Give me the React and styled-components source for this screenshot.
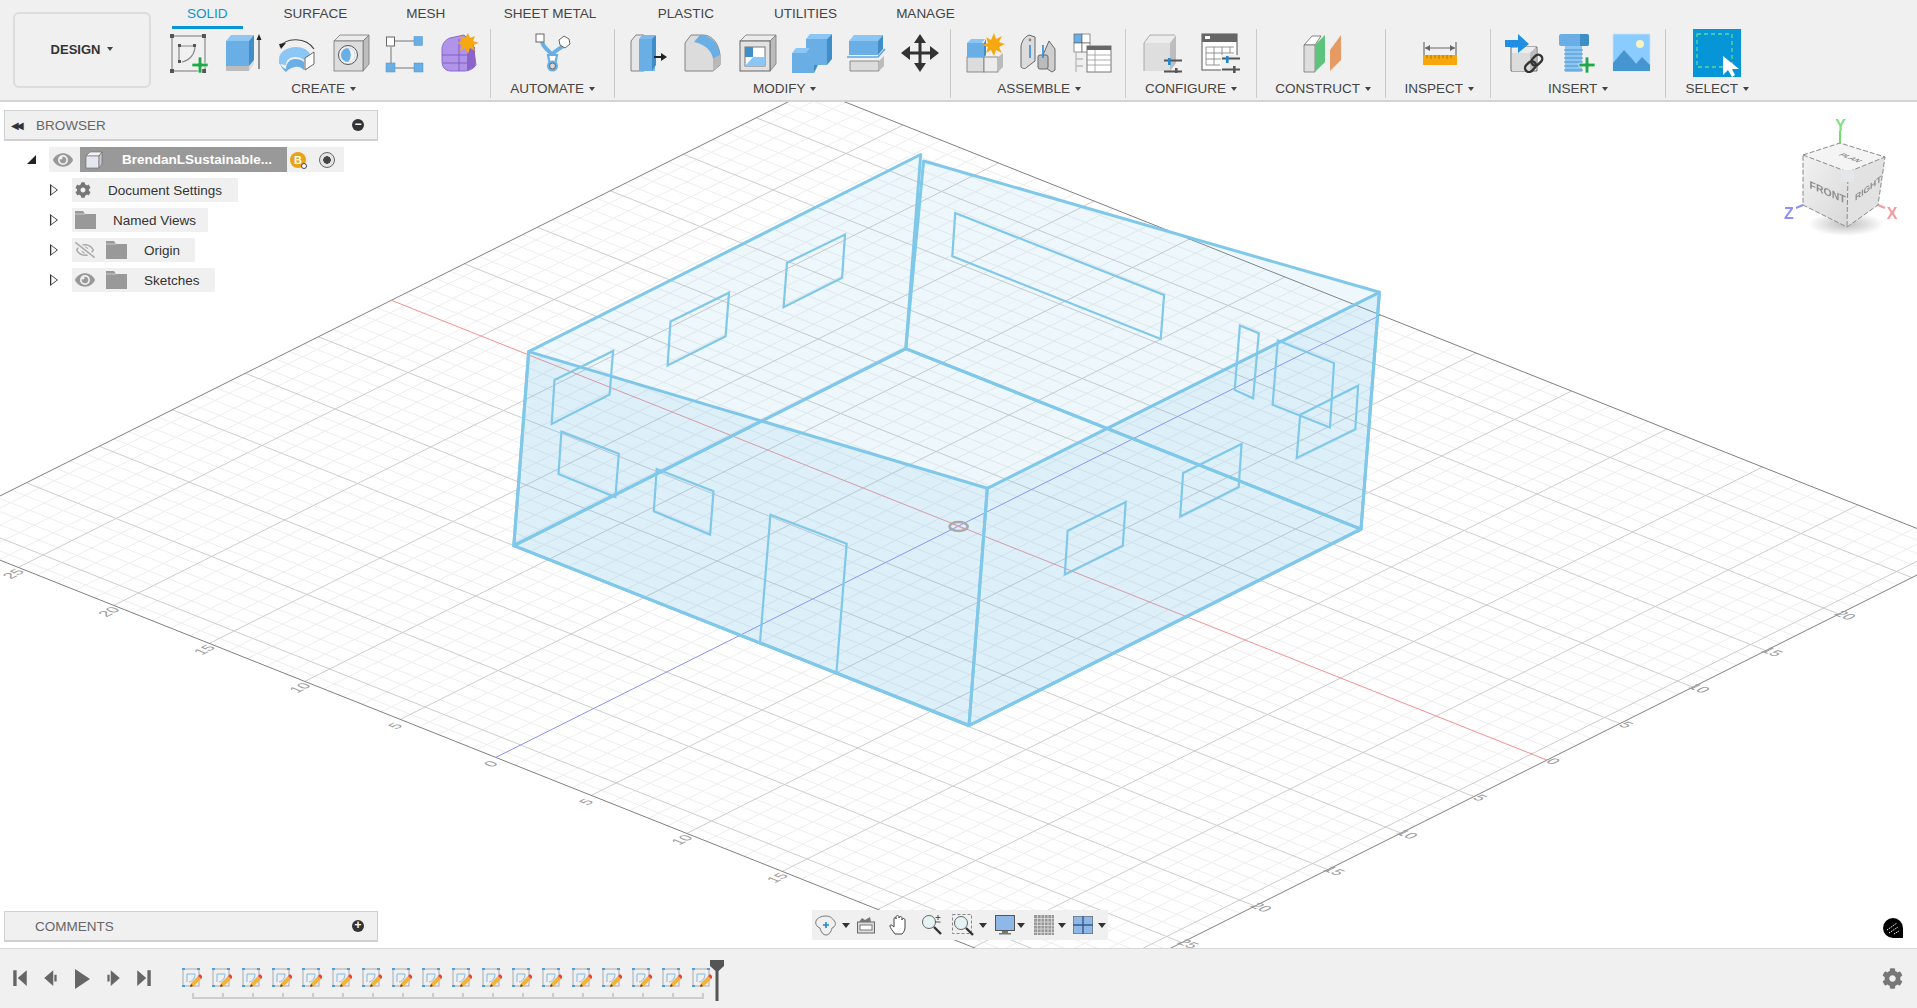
import React from 'react';
import styled, { createGlobalStyle } from 'styled-components';
import { FaCog, FaEye, FaRegEyeSlash } from 'react-icons/fa';

const GlobalStyle = createGlobalStyle`
  html, body {
    margin: 0;
    padding: 0;
    height: 100%;
    overflow: hidden;
    background: #fff;
    font-family: "Liberation Sans", Arial, sans-serif;
  }
`;

const BLUE = '#69aee4';
const DARK = '#3f8ec8';
const GREEN = '#21a84a';

/* ---------- toolbar icons ---------- */

const Ico = ({ w = 40, children }) => (
  <svg width={w} height="40" viewBox={`0 0 ${w} 40`}>
    {children}
  </svg>
);

const Plus = ({ x, y, s = 8 }) => (
  <path d={`M${x - 1.8} ${y - s}h3.6v${s - 1.8}h${s - 1.8}v3.6h-${s - 1.8}v${s - 1.8}h-3.6v-${s - 1.8}h-${s - 1.8}v-3.6h${s - 1.8}z`} fill={GREEN} stroke="#fff" strokeWidth=".6" />
);

const SketchIcon = () => (
  <Ico>
    <rect x="3" y="3" width="33" height="35" fill="none" stroke="#777" strokeWidth="1" />
    {[[1, 1], [33, 1], [1, 36], [33, 36]].map(([x, y]) => (
      <rect key={x + '' + y} x={x} y={y} width="4" height="4" fill="#555" />
    ))}
    <path d="M10 13v15M10 13h15M26 13c0 8-5 14-13 16" fill="none" stroke="#888" strokeWidth="1.2" />
    <rect x="9" y="11" width="3" height="3" fill="#555" />
    <rect x="24" y="11" width="3" height="3" fill="#555" />
    <rect x="9" y="27" width="3" height="3" fill="#555" />
    <Plus x={31} y={32} />
  </Ico>
);

const ExtrudeIcon = () => (
  <Ico>
    <path d="M3 33h23v5H3z" fill="#bdbdbd" />
    <path d="M26 38l5-7v-4l-5 6z" fill="#ddd" />
    <path d="M3 8h23v25H3z" fill={BLUE} />
    <path d="M3 8l5-6h23l-5 6z" fill="#8fc6f2" />
    <path d="M26 8l5-6v25l-5 6z" fill={DARK} />
    <path d="M36 36V4" stroke="#333" strokeWidth="1" />
    <path d="M33.5 7L36 1l2.5 6z" fill="#222" />
  </Ico>
);

const RevolveIcon = () => (
  <Ico>
    <path d="M3 14c6-10 26-10 34 2" fill="none" stroke="#444" strokeWidth="1.2" />
    <path d="M2 11l7-1-5 6z" fill="#222" />
    <path d="M2 26c0-7 8-12 17-12 7 0 12 3 14 7l-6 6c-2-2-5-3-9-3-5 0-9 3-9 8l-7-1z" fill="#8cc6f5" />
    <path d="M2 24c0 6 2 10 7 12 0-6 4-10 9-10 4 0 7 1 9 3v8c-3-3-6-4-9-3-5 1-7 3-9 5-4-3-7-8-7-15z" fill={BLUE} />
    <path d="M28 25l9-6v12l-9 6z" fill="#fff" stroke="#666" strokeWidth="1" />
  </Ico>
);

const HoleIcon = () => (
  <Ico>
    <path d="M3 8l6-6h29l-6 6z" fill="#ececec" stroke="#777" strokeWidth=".8" />
    <path d="M32 8l6-6v29l-6 7z" fill="#bdbdbd" stroke="#777" strokeWidth=".8" />
    <rect x="3" y="8" width="29" height="30" fill="#ddd" stroke="#777" strokeWidth=".8" />
    <circle cx="17" cy="22" r="9.5" fill="#eee" stroke="#555" strokeWidth="1" />
    <circle cx="17" cy="22" r="7" fill={BLUE} />
    <path d="M17 15a7 7 0 0 1 0 14 10 10 0 0 0 0-14z" fill="#f2f2f2" />
  </Ico>
);

const PatternIcon = () => (
  <Ico>
    <path d="M10 8h19M6 14v16M10 35h19" stroke="#777" strokeWidth="1" />
    <rect x="1.5" y="4" width="8" height="9" fill="#fff" stroke="#666" />
    <rect x="29" y="3.5" width="8.5" height="9" fill={BLUE} stroke="#4d93c9" strokeWidth=".5" />
    <rect x="1" y="30" width="9" height="9" fill={BLUE} stroke="#4d93c9" strokeWidth=".5" />
    <rect x="29" y="30" width="9" height="9" fill={BLUE} stroke="#4d93c9" strokeWidth=".5" />
  </Ico>
);

const FormIcon = () => (
  <Ico>
    <path d="M3 16c0-5 3-9 8-11l14-3 9 8 3 22c-3 4-7 6-12 6H12C6 38 3 34 3 28z" fill="#b094ea" stroke="#8e68d0" />
    <path d="M3 22h30M20 6v32M4 30h28" stroke="#7f58bf" strokeWidth=".9" fill="none" />
    <path d="M28 14h8v20l-8 4z" fill="#8a63cb" />
    <path d="M29 0l2 5 5-2-2 5 6 2-6 2 2 6-5-3-2 6-3-6-5 3 2-6-5-2 5-2-2-5 5 2z" fill="#f6a811" />
  </Ico>
);

const AutomateIcon = () => (
  <Ico>
    <path d="M9 9c2 7 7 8 10 13 3-5 8-6 12-10" fill="none" stroke={BLUE} strokeWidth="4" />
    <path d="M15 22h9l-2 10h-5z" fill="#fff" stroke={BLUE} strokeWidth="2.2" />
    <rect x="3" y="1" width="8" height="8" fill="#fff" stroke="#666" />
    <path d="M31 3l5 3 1 5-5 4-5-3-1-5z" fill="#fff" stroke="#666" />
    <circle cx="19.5" cy="33" r="5.5" fill={BLUE} />
    <circle cx="19.5" cy="33" r="3" fill="#d8d8d8" stroke="#666" />
  </Ico>
);

const PressPullIcon = () => (
  <Ico>
    <path d="M1 8l5-6h8v36H1z" fill="#e6e6e6" stroke="#777" strokeWidth=".9" />
    <path d="M9 6l3-4h13v36H9z" fill="#7db9ea" />
    <path d="M22 6l4-4v30l-4 6z" fill={DARK} />
    <path d="M9 6h13v32H9z" fill={BLUE} />
    <path d="M24 24h9" stroke="#222" strokeWidth="2" />
    <path d="M31 20l6 4-6 4z" fill="#222" />
  </Ico>
);

const FilletIcon = () => (
  <Ico>
    <path d="M1 38V10l6-8h12c10 0 16 10 17 20v10l-7 6z" fill="#dcdcdc" stroke="#777" strokeWidth=".9" />
    <path d="M16 2c10 0 19 8 20 20l-7 4c-1-8-8-15-19-17z" fill={BLUE} />
    <path d="M29 26l7-4v10l-7 6z" fill="#b9b9b9" />
  </Ico>
);

const ShellIcon = () => (
  <Ico>
    <path d="M2 8l6-6h30l-6 6z" fill="#ececec" stroke="#777" strokeWidth=".8" />
    <path d="M32 8l6-6v29l-6 7z" fill="#bbb" stroke="#777" strokeWidth=".8" />
    <rect x="2" y="8" width="30" height="30" fill="#e2e2e2" stroke="#666" />
    <rect x="7" y="14" width="20" height="19" fill="#fff" stroke="#777" />
    <path d="M7 14h8v10H7z" fill={DARK} />
    <path d="M7 33l8-9h12v9z" fill="#8cc6f5" />
  </Ico>
);

const CombineIcon = () => (
  <Ico>
    <path d="M14 6l4-5h22l-5 5z" fill="#8cc6f5" />
    <path d="M14 6h21v26H14z" fill={BLUE} />
    <path d="M35 6l5-5v25l-5 6z" fill={DARK} />
    <path d="M0 20l4-5h14l-4 5z" fill="#8cc6f5" />
    <path d="M0 20h22v20H0z" fill={BLUE} />
    <path d="M22 32h4l-4 8z" fill={DARK} />
  </Ico>
);

const SplitIcon = () => (
  <Ico>
    <path d="M3 8l5-6h29l-5 6z" fill="#8cc6f5" />
    <path d="M3 8h29v14H3z" fill={BLUE} />
    <path d="M32 8l5-6v14l-5 6z" fill={DARK} />
    <path d="M1 24h31l7-8" fill="none" stroke="#5da8e2" strokeWidth="1.6" />
    <path d="M4 28h29v10H4z" fill="#dcdcdc" stroke="#777" strokeWidth=".8" />
    <path d="M33 28l5-5v10l-5 5z" fill="#bbb" />
  </Ico>
);

const MoveIcon = () => (
  <Ico>
    <path d="M20 1l6 9h-4.500v8.500H30V13l9 7-9 7v-5.500h-8.500V30H26l-6 9-6-9h4.500v-8.500H10V27l-9-7 9-7v5.500h8.500V10H14z" fill="#333" />
  </Ico>
);

const ComponentIcon = () => (
  <Ico>
    <rect x="2" y="24" width="17" height="15" fill="#dcdcdc" stroke="#777" strokeWidth=".8" />
    <rect x="19" y="24" width="14" height="15" fill="#ececec" stroke="#777" strokeWidth=".8" />
    <path d="M33 24l5-4v14l-5 5z" fill="#bbb" />
    <path d="M2 10l4-4h14l-3 4z" fill="#8cc6f5" />
    <path d="M2 10h17v14H2z" fill={BLUE} />
    <path d="M19 10l2-4v16l-2 2z" fill={DARK} />
    <path d="M29 0l2 6 6-3-3 6 6 2-6 3 3 6-6-3-2 6-3-6-5 3 2-6-6-2 6-2-2-6 5 3z" fill="#f6a811" />
  </Ico>
);

const JointIcon = () => (
  <Ico>
    <path d="M2 34V14c0-4 3-10 8-12l6 2v24l-8 6c-1 2-4 2-6 0z" fill="#dcdcdc" stroke="#666" />
    <path d="M24 22l6-14 6 8v21l-3 2-9-6z" fill="#cfcfcf" stroke="#666" />
    <rect x="19" y="22" width="10" height="14" rx="2" fill="#bbb" stroke="#666" />
    <path d="M24 12v13M11 12v13" stroke="#2b8fe0" strokeWidth="1.6" />
    <circle cx="11" cy="7" r="1.4" fill="#888" />
  </Ico>
);

const TableIcon = () => (
  <Ico>
    <rect x="1" y="1" width="8" height="9" fill={BLUE} stroke="#666" strokeWidth=".7" />
    <rect x="9" y="1" width="8" height="9" fill="#fff" stroke="#666" strokeWidth=".7" />
    <rect x="1" y="10" width="8" height="9" fill="#fff" stroke="#666" strokeWidth=".7" />
    <rect x="9" y="10" width="8" height="9" fill="#fff" stroke="#666" strokeWidth=".7" />
    <path d="M3 19v20M3 26h7M3 33h7" stroke="#bbb" strokeWidth="1.4" />
    <rect x="14" y="13" width="24" height="26" fill="#fff" stroke="#777" />
    <rect x="14" y="13" width="24" height="4" fill="#666" />
    <path d="M14 22h24M14 27h24M14 32h24M22 17v22" stroke="#999" strokeWidth=".8" />
  </Ico>
);

const Sliders = ({ x, y }) => (
  <g transform={`translate(${x} ${y})`}>
    <path d="M0 2.5h18M0 13.5h18" stroke="#555" strokeWidth="2.2" />
    <rect x="4" y="0" width="2.6" height="7" fill="#1e88d8" />
    <rect x="11" y="10" width="2.6" height="7" fill="#555" />
  </g>
);

const ConfigBoxIcon = () => (
  <Ico>
    <path d="M2 10l6-8h24l-4 8z" fill="#ececec" />
    <path d="M2 10h26v28H2z" fill="#dedede" />
    <path d="M28 10l6-8v28l-6 8z" fill="#bdbdbd" />
    <path d="M2 38V10l6-8h25" fill="none" stroke="#999" strokeWidth=".8" />
    <Sliders x={22} y={25} />
  </Ico>
);

const ConfigTableIcon = () => (
  <Ico>
    <rect x="1" y="1" width="35" height="36" fill="#fff" stroke="#555" strokeWidth="1" />
    <rect x="1" y="1" width="35" height="8" fill="#666" />
    <rect x="4" y="3" width="5" height="3" fill="#fff" />
    <path d="M5 14h28M5 20h28M5 26h20M5 32h14M5 14v18M13 14v18M21 14v12M29 14v6" stroke="#888" strokeWidth=".9" fill="none" />
    <rect x="20" y="22" width="20" height="18" fill="#f0f0f0" />
    <Sliders x={21} y={23} />
  </Ico>
);

const ConstructIcon = () => (
  <Ico>
    <path d="M1 12l8-9h9l-6 9z" fill="#fff" stroke="#666" strokeWidth=".8" />
    <path d="M1 12h11v27H1z" fill="#dedede" stroke="#777" strokeWidth=".8" />
    <path d="M12 12l10-10v27L12 39z" fill="#5cc47d" />
    <path d="M27 17l11-15v25L27 38z" fill="#e79a63" />
  </Ico>
);

const InspectIcon = () => (
  <Ico>
    <path d="M5 9v13M37 9v13" stroke="#555" strokeWidth="1" />
    <path d="M6 15h30" stroke="#666" strokeWidth="1" />
    <path d="M11 12l-5 3 5 3zM31 12l5 3-5 3z" fill="#666" />
    <rect x="4" y="22" width="34" height="10" fill="#f5a70c" />
    <path d="M8 22v3M12 22v4M16 22v3M20 22v4M24 22v3M28 22v4M32 22v3" stroke="#9d6b00" strokeWidth=".8" />
  </Ico>
);

const DeriveIcon = () => (
  <Ico>
    <path d="M7 14h26v24H7z" fill="none" stroke="#666" strokeWidth="1" />
    <path d="M8 20l6-6h18l-6 6z" fill="#ececec" />
    <path d="M8 20h18v18H8z" fill="#dcdcdc" />
    <path d="M26 20l6-6v18l-6 6z" fill="#bdbdbd" />
    <path d="M1 7h13V1l11 10-11 9v-6H1z" fill="#1f8fe4" />
    <g fill="none" stroke="#333" strokeWidth="2.4" transform="rotate(-45 30 30)">
      <rect x="19" y="26" width="12" height="8" rx="4" />
      <rect x="28" y="26" width="12" height="8" rx="4" />
    </g>
  </Ico>
);

const BoltIcon = () => (
  <Ico>
    <path d="M1 3c0-1 1-2 2-2h26c1 0 2 1 2 2v8c0 1-1 2-2 2H3c-1 0-2-1-2-2z" fill={BLUE} />
    <path d="M22 1h7c1 0 2 1 2 2v8c0 1-1 2-2 2h-7z" fill={DARK} />
    <rect x="7" y="13" width="17" height="26" fill="#8cc6f5" />
    <path d="M6 17h19M6 21h19M6 25h19M6 29h19M6 33h19M6 37h19" stroke="#4d93c9" strokeWidth="1.2" />
    <Plus x={29} y={32} />
  </Ico>
);

const ImageIcon = () => (
  <Ico>
    <rect x="1" y="1" width="37" height="37" fill="#8accff" stroke="#c8e4f8" strokeWidth=".8" />
    <circle cx="28" cy="11" r="4" fill="#f8f3c0" />
    <path d="M1 30l11-13 9 10 3 4 6-7 8 8v6H1z" fill="#4596d0" />
  </Ico>
);

const SelectIcon = () => (
  <svg width="48" height="48" viewBox="0 0 48 48">
    <rect width="48" height="48" fill="#0696d7" />
    <rect x="4" y="5" width="35" height="33" fill="none" stroke="#62d6a0" strokeWidth="1.3" strokeDasharray="4 3" />
    <path d="M30 27v19l5-5 4 7 3-2-3-6h7z" fill="#fff" />
  </svg>
);

/* ---------- viewport scene ---------- */

const O = [958.6, 526];
const U = [19.1, 7.6];
const V = [14.6, -7.3];
const T_MIN = -29.7;
const T_MAX = 30.8;
const S_MIN = -31.7;
const S_MAX = 28.9;

const at = (t, s) => [O[0] + t * U[0] + s * V[0], O[1] + t * U[1] + s * V[1]];
const seg = (a, b) => ({ x1: a[0], y1: a[1], x2: b[0], y2: b[1] });
const range = (a, b) => {
  const out = [];
  for (let i = Math.ceil(a); i <= b; i++) out.push(i);
  return out;
};

// model points were read off a crop of the reference
const m = (x, y) => [500 + x * 0.574, 140 + y * 0.3827];
const poly = pts => pts.map(([x, y]) => m(x, y).map(n => n.toFixed(1)).join(',')).join(' ');

const faces = [
  [[24, 1060], [707, 545], [1500, 1017], [817, 1530]],
  [[50, 553], [849, 910], [817, 1530], [24, 1060]],
  [[849, 910], [1532, 398], [1500, 1017], [817, 1530]],
  [[50, 553], [733, 38], [707, 545], [24, 1060]],
  [[738, 55], [1532, 398], [1500, 1017], [707, 545]],
];

const openings = [
  [[500, 321], [601, 247], [596, 360], [494, 437]],
  [[297, 474], [399, 399], [393, 513], [292, 589]],
  [[95, 627], [197, 551], [191, 665], [90, 742]],
  [[793, 191], [1157, 405], [1151, 520], [788, 304]],
  [[107, 762], [207, 820], [201, 933], [102, 873]],
  [[273, 860], [372, 918], [366, 1031], [268, 970]],
  [[471, 979], [604, 1055], [586, 1393], [453, 1313]],
  [[989, 1021], [1090, 946], [1085, 1060], [984, 1135]],
  [[1190, 870], [1292, 794], [1287, 907], [1185, 984]],
  [[1394, 718], [1495, 642], [1490, 756], [1388, 831]],
  [[1289, 485], [1322, 505], [1312, 675], [1280, 653]],
  [[1355, 524], [1453, 583], [1446, 751], [1346, 692]],
];

const Scene = () => {
  const ts = range(T_MIN, T_MAX);
  const ss = range(S_MIN, S_MAX);
  const outline = [at(T_MIN, S_MIN), at(T_MIN, S_MAX), at(T_MAX, S_MAX), at(T_MAX, S_MIN)];
  return (
    <SceneSvg viewBox="0 102 1917 846">
      {ts.filter(t => t % 5).map(t => <line key={'a' + t} {...seg(at(t, S_MIN), at(t, S_MAX))} stroke="#eeeeee" />)}
      {ss.filter(s => s % 5).map(s => <line key={'b' + s} {...seg(at(T_MIN, s), at(T_MAX, s))} stroke="#eeeeee" />)}
      {ts.filter(t => t && t % 5 === 0).map(t => <line key={'c' + t} {...seg(at(t, S_MIN), at(t, S_MAX))} stroke="#cdcdcd" />)}
      {ss.filter(s => s && s % 5 === 0).map(s => <line key={'d' + s} {...seg(at(T_MIN, s), at(T_MAX, s))} stroke="#cdcdcd" />)}
      <polygon points={outline.map(p => p.join(',')).join(' ')} fill="none" stroke="#808080" />
      <line {...seg(at(T_MIN, 0), at(T_MAX, 0))} stroke="#f79090" />
      <line {...seg(at(0, S_MIN), at(0, S_MAX))} stroke="#9090f8" />
      {[-25, -20, -15, -10, -5, 0, 5, 10, 15, 20].map(t => {
        const [x, y] = at(t, S_MIN - 0.3);
        return (
          <GridLabel key={'l' + t} transform={`matrix(.9 -.45 .93 .37 ${x + 4} ${y + 6})`}>{Math.abs(t)}</GridLabel>
        );
      })}
      {[-25, -20, -15, -10, -5, 0, 5, 10, 15, 20].map(s => {
        const [x, y] = at(T_MAX + 0.2, s);
        return (
          <GridLabel key={'r' + s} transform={`matrix(.93 .37 -.9 .45 ${x - 2} ${y + 2})`}>{Math.abs(s)}</GridLabel>
        );
      })}
      {faces.map((f, i) => <polygon key={i} points={poly(f)} fill="#6ec1ea" fillOpacity=".12" stroke="#80c8ea" strokeWidth="3" strokeLinejoin="round" />)}
      {openings.map((f, i) => <polygon key={i} points={poly(f)} fill="none" stroke="#80c8ea" strokeWidth="2.2" />)}
      <ellipse cx="958.6" cy="526.5" rx="9" ry="4.5" fill="none" stroke="#aaa" strokeWidth="2.6" />
      <line x1="953" y1="524" x2="964" y2="529" stroke="#f59a9a" />
      <line x1="953" y1="529" x2="964" y2="523" stroke="#a9a9f5" />
    </SceneSvg>
  );
};

const ViewCube = () => (
  <CubeSvg viewBox="1760 102 157 140">
    <defs>
      <radialGradient id="cubeShadow">
        <stop offset="0" stopColor="#999" stopOpacity=".65" />
        <stop offset="1" stopColor="#999" stopOpacity="0" />
      </radialGradient>
      <linearGradient id="cubeFront" x1="0" y1="0" x2="1" y2="1">
        <stop offset="0" stopColor="#f2f2f2" />
        <stop offset="1" stopColor="#d8d8d8" />
      </linearGradient>
    </defs>
    <ellipse cx="1846" cy="224" rx="38" ry="12" fill="url(#cubeShadow)" />
    <path d="M1840 143v-12" stroke="#6ee06e" strokeWidth="2" />
    <path d="M1803 205l-7 3" stroke="#8f8ff5" strokeWidth="2" />
    <path d="M1878 205l7 3" stroke="#f59a9a" strokeWidth="2" />
    <CubeAxis x="1840.5" y="131" fill="#7ee07e">Y</CubeAxis>
    <CubeAxis x="1789" y="219" fill="#8f8ff5">Z</CubeAxis>
    <CubeAxis x="1892" y="219" fill="#f59a9a">X</CubeAxis>
    <path d="M1803 155l37-12 45 14-37 15z" fill="#f4f4f4" />
    <path d="M1803 155l45 17-1 55-44-22z" fill="url(#cubeFront)" />
    <path d="M1848 172l37-15-7 48-31 22z" fill="#e2e2e2" />
    <path d="M1803 155l37-12 45 14-7 48-31 22-44-22zM1803 155l45 17 37-15M1848 172l-1 55" fill="none" stroke="#8a8a8a" strokeWidth="1" strokeDasharray="5 2" />
    <rect x="1841" y="170" width="13" height="12" fill="#e3e6ea" />
    <CubeText transform="matrix(1 .43 0 1 1809.5 188)" fontSize="10.5">FRONT</CubeText>
    <CubeText transform="matrix(1 -.75 0 1 1855 201)" fontSize="8.5">RIGHT</CubeText>
    <CubeText transform="matrix(.8 .3 -.9 .3 1838 155)" fontSize="9">PLAN</CubeText>
  </CubeSvg>
);

/* ---------- small parts ---------- */

const Folder = () => (
  <svg width="21" height="18" viewBox="0 0 21 18">
    <path d="M0 0h8l2 3h11v15H0z" fill="#999" />
    <path d="M0 3h10" stroke="#f0f0f0" strokeWidth=".6" />
  </svg>
);

const OrbitIcon = () => (
  <svg width="22" height="22" viewBox="0 0 22 22" fill="none" stroke="#777">
    <path d="M11 2c5 0 7 3 9 6 1 2 0 5-3 6-1 4-3 7-6 7-3 0-5-3-6-7-3-1-5-4-4-7 1-3 5-5 10-5z" />
    <path d="M11 8v6M8 11h6" stroke="#1e88d8" strokeWidth="1.6" />
  </svg>
);

const CamIcon = () => (
  <svg width="20" height="20" viewBox="0 0 20 20">
    <rect x="1.5" y="7" width="17" height="11" fill="#ddd" stroke="#666" />
    <rect x="4" y="10" width="12" height="5" fill="#fff" stroke="#777" />
    <path d="M3 7l3-4 3 2 5-3 1 5" fill="#777" />
  </svg>
);

const HandIcon = () => (
  <svg width="22" height="22" viewBox="0 0 22 22" fill="#fff" stroke="#444" strokeWidth="1">
    <path d="M6 20c-2-3-5-6-5-8s2-1 4 1V5c0-2 2-2 2 0V3c0-2 3-2 3 0v1c0-2 3-2 3 0v2c0-2 3-2 3 0v7c0 3-1 5-3 7z" />
  </svg>
);

const ZoomIcon = () => (
  <svg width="22" height="22" viewBox="0 0 22 22">
    <circle cx="8" cy="8" r="6.5" fill="#e6f3f5" stroke="#666" />
    <path d="M13 13l7 7" stroke="#333" strokeWidth="2.4" />
    <path d="M17 1v5M14.500 3.500h5M14.500 8h5" stroke="#444" strokeWidth=".9" />
  </svg>
);

const FitIcon = () => (
  <svg width="22" height="22" viewBox="0 0 22 22">
    <rect x=".5" y=".5" width="19" height="19" fill="none" stroke="#888" strokeDasharray="3 2" />
    <circle cx="9" cy="9" r="6.500" fill="#e6f3f5" stroke="#666" />
    <path d="M14 14l7 7" stroke="#333" strokeWidth="2.400" />
  </svg>
);

const DisplayIcon = () => (
  <svg width="20" height="20" viewBox="0 0 20 20">
    <rect x=".5" y=".5" width="19" height="15" fill="#8fb8e6" stroke="#555" />
    <path d="M7 16h6v2H7zM4 18h12v1.500H4z" fill="#777" />
  </svg>
);

const GridIcon = () => (
  <svg width="20" height="20" viewBox="0 0 20 20">
    <rect width="20" height="20" fill="#999" />
    <path d="M0 3.500h20M0 7h20M0 10.500h20M0 14h20M0 17.500h20M3.500 0v20M7 0v20M10.500 0v20M14 0v20M17.500 0v20" stroke="#ddd" strokeWidth=".8" />
  </svg>
);

const ViewsIcon = () => (
  <svg width="20" height="18" viewBox="0 0 20 18">
    <rect width="20" height="18" fill="#8fb8e6" stroke="#555" />
    <path d="M10 0v18M0 9h20" stroke="#335a8a" strokeWidth="1.400" />
  </svg>
);

const MiniSketch = () => (
  <svg width="20" height="20" viewBox="0 0 20 20">
    <rect x="1" y="1" width="16" height="17" fill="none" stroke="#aaa" />
    <path d="M0 0h3v2H0zM15 0h3v2h-3zM0 17h3v2H0z" fill="#4aa0e0" />
    <path d="M5 6v8M5 6h8M13 6c0 4-2 7-6 8" fill="none" stroke="#7db9ea" />
    <path d="M8 19l1-4 7-7 3 3-7 7z" fill="#f3b23e" />
    <path d="M16 8l2-2 3 3-2 2z" fill="#ee4035" />
    <path d="M8 19l1-3 2 2z" fill="#444" />
  </svg>
);

const Step = ({ d }) => (
  <svg width="18" height="18" viewBox="0 0 16 16">
    <path d={d} fill="#666" />
  </svg>
);

/* ---------- page ---------- */

const tabs = [
  { label: 'SOLID', gap: 26 },
  { label: 'SURFACE', gap: 29 },
  { label: 'MESH', gap: 28.5 },
  { label: 'SHEET METAL', gap: 31.5 },
  { label: 'PLASTIC', gap: 30 },
  { label: 'UTILITIES', gap: 29 },
  { label: 'MANAGE', gap: 0 },
];

const groups = [
  { label: 'CREATE', width: 331, right: 3, gap: 14, icons: [SketchIcon, ExtrudeIcon, RevolveIcon, HoleIcon, PatternIcon, FormIcon] },
  { label: 'AUTOMATE', width: 124, gap: 0, icons: [AutomateIcon] },
  { label: 'MODIFY', width: 336, left: 4, gap: 14, icons: [PressPullIcon, FilletIcon, ShellIcon, CombineIcon, SplitIcon, MoveIcon] },
  { label: 'ASSEMBLE', width: 175, left: 2, gap: 14, icons: [ComponentIcon, JointIcon, TableIcon] },
  { label: 'CONFIGURE', width: 131, gap: 19, icons: [ConfigBoxIcon, ConfigTableIcon] },
  { label: 'CONSTRUCT', width: 129, left: 4, gap: 0, icons: [ConstructIcon] },
  { label: 'INSPECT', width: 105, left: 2, gap: 0, icons: [InspectIcon] },
  { label: 'INSERT', width: 175, gap: 14, icons: [DeriveIcon, BoltIcon, ImageIcon] },
  { label: 'SELECT', width: 102, gap: 0, last: true, icons: [SelectIcon] },
];

const App = () => (
  <Page>
    <GlobalStyle />
    <Toolbar>
      <DesignButton>
        DESIGN <Caret />
      </DesignButton>
      <ToolColumn>
        <Tabs>
          {tabs.map((t, i) => (
            <Tab key={t.label} $active={i === 0} $gap={t.gap}>{t.label}</Tab>
          ))}
        </Tabs>
        <Groups>
          {groups.map(g => (
            <Group key={g.label} $w={g.width} $left={g.left} $right={g.right} $last={g.last}>
              <IconRow $gap={g.gap}>
                {g.icons.map((I, i) => <I key={i} />)}
              </IconRow>
              <GroupLabel>{g.label} <Caret /></GroupLabel>
            </Group>
          ))}
        </Groups>
      </ToolColumn>
    </Toolbar>

    <Viewport>
      <Scene />
      <ViewCube />

      <BrowserPanel>
        <PanelHead>
          <Rewind>◀◀</Rewind>
          <PanelTitle>BROWSER</PanelTitle>
          <RoundBtn>−</RoundBtn>
        </PanelHead>
        <Tree>
          <RootRow>
            <Collapse />
            <RootCell>
              <EyeCell $w={28}><FaEye size={20} color="#999" /></EyeCell>
              <NameCell>
                <svg width="18" height="18" viewBox="0 0 18 18">
                  <path d="M1 5l4-4h12l-3 4z" fill="#f4f4f4" stroke="#666" strokeWidth=".6" />
                  <path d="M1 5h13v12H1z" fill="#e4e7ee" stroke="#666" strokeWidth=".6" />
                  <path d="M14 5l3-4v12l-3 4z" fill="#c6c9d0" stroke="#666" strokeWidth=".6" />
                </svg>
                <NameText>BrendanLSustainable...</NameText>
              </NameCell>
              <EyeCell $w={22}>
                <Badge>B</Badge>
              </EyeCell>
              <EyeCell $w={35}>
                <Radio />
              </EyeCell>
            </RootCell>
          </RootRow>
          <Row>
            <Expand />
            <Chip>
              <FaCog size={16} color="#777" />
              <ChipText $ml={17} $mr={16}>Document Settings</ChipText>
            </Chip>
          </Row>
          <Row>
            <Expand />
            <Chip>
              <Folder />
              <ChipText $ml={17} $mr={12}>Named Views</ChipText>
            </Chip>
          </Row>
          <Row>
            <Expand />
            <Chip>
              <FaRegEyeSlash size={20} color="#aaa" />
              <FolderSlot><Folder /></FolderSlot>
              <ChipText $ml={17} $mr={15}>Origin</ChipText>
            </Chip>
          </Row>
          <Row>
            <Expand />
            <Chip>
              <FaEye size={20} color="#999" />
              <FolderSlot><Folder /></FolderSlot>
              <ChipText $ml={17} $mr={15}>Sketches</ChipText>
            </Chip>
          </Row>
        </Tree>
      </BrowserPanel>

      <CommentsPanel>
        <PanelTitle $flush>COMMENTS</PanelTitle>
        <RoundBtn>+</RoundBtn>
      </CommentsPanel>

      <NavBar>
        <NavItem $gap={4}><OrbitIcon /><NavCaret /></NavItem>
        <NavItem $ml={6}><CamIcon /></NavItem>
        <NavItem $ml={13}><HandIcon /></NavItem>
        <NavItem $ml={10}><ZoomIcon /></NavItem>
        <NavItem $ml={9} $gap={4}><FitIcon /><NavCaret /></NavItem>
        <NavItem $ml={8} $gap={1}><DisplayIcon /><NavCaret /></NavItem>
        <NavItem $ml={9} $gap={3}><GridIcon /><NavCaret /></NavItem>
        <NavItem $ml={7} $gap={4}><ViewsIcon /><NavCaret /></NavItem>
      </NavBar>

      <DropBadge>
        <svg width="20" height="20" viewBox="0 0 20 20">
          <path d="M10 0a10 10 0 0 1 10 10v10H10A10 10 0 0 1 10 0z" fill="#000" />
          <path d="M4 12l10-7M6 15l9-6M11 16l5-3" stroke="#fff" strokeDasharray="1.500 1" />
        </svg>
      </DropBadge>
    </Viewport>

    <Timeline>
      <Controls>
        <ControlCell><Step d="M2 1h3v14H2zM14 1v14L6 8z" /></ControlCell>
        <ControlCell><Step d="M10 1v14L2 8zM11 5h2v6h-2z" /></ControlCell>
        <ControlCell><svg width="16" height="20" viewBox="0 0 16 20"><path d="M1 0l15 10L1 20z" fill="#666" /></svg></ControlCell>
        <ControlCell><Step d="M6 1v14l8-7zM3 5h2v6H3z" /></ControlCell>
        <ControlCell><Step d="M2 1v14l8-7zM11 1h3v14h-3z" /></ControlCell>
      </Controls>
      <Track>
        <TrackItems>
          {Array.from({ length: 18 }, (_, i) => (
            <TrackItem key={i}><MiniSketch /></TrackItem>
          ))}
        </TrackItems>
        <TrackRail />
      </Track>
      <Marker>
        <svg width="14" height="41" viewBox="0 0 14 41">
          <path d="M0 0h14v6l-5.500 5v30h-3V11L0 6z" fill="#555" />
        </svg>
      </Marker>
      <TimelineGear><FaCog size={21} color="#777" /></TimelineGear>
    </Timeline>
  </Page>
);

export default App;

const Page = styled.div`
  height: 1008px;
  width: 1917px;
  display: flex;
  flex-direction: column;
  color: #444;
  overflow: hidden;
`;

const Toolbar = styled.header`
  height: 102px;
  box-sizing: border-box;
  background: #f0f0f0;
  border-bottom: 2px solid #d4d4d4;
  display: flex;
  flex: none;
`;

const DesignButton = styled.div`
  box-sizing: border-box;
  width: 138px;
  height: 76px;
  margin: 12px 9px 0 13px;
  padding-bottom: 2px;
  border: 2px solid #dcdcdc;
  border-radius: 6px;
  font-size: 13px;
  font-weight: 700;
  color: #333;
  display: flex;
  align-items: center;
  justify-content: center;
  gap: 6px;
`;

const Caret = styled.span`
  display: inline-block;
  width: 0;
  height: 0;
  margin-left: 1px;
  vertical-align: middle;
  border-left: 3.5px solid transparent;
  border-right: 3.5px solid transparent;
  border-top: 4.5px solid #444;
`;

const ToolColumn = styled.div`
  display: flex;
  flex-direction: column;
`;

const Tabs = styled.nav`
  display: flex;
  height: 29px;
  box-sizing: border-box;
  margin-left: 12px;
`;

const Tab = styled.div`
  box-sizing: border-box;
  height: 29px;
  padding: 6px 15px 0;
  margin-right: ${p => p.$gap}px;
  font-size: 13.5px;
  line-height: 15px;
  color: ${p => (p.$active ? '#0696d7' : '#444')};
  border-bottom: 3px solid ${p => (p.$active ? '#0696d7' : 'transparent')};
`;

const Groups = styled.div`
  display: flex;
  height: 71px;
`;

const Group = styled.div`
  box-sizing: border-box;
  width: ${p => p.$w}px;
  padding: 0 ${p => p.$right || 0}px 0 ${p => p.$left || 0}px;
  display: flex;
  flex-direction: column;
  align-items: center;
  border-right: ${p => (p.$last ? 'none' : '1px solid #ccc')};
  margin-bottom: 2px;
`;

const IconRow = styled.div`
  display: flex;
  align-items: center;
  justify-content: center;
  height: 46px;
  padding-top: 2px;
  box-sizing: border-box;
  gap: ${p => p.$gap}px;
`;

const GroupLabel = styled.div`
  font-size: 13.5px;
  line-height: 16px;
  margin-top: 6px;
  color: #444;
  white-space: nowrap;
`;

const Viewport = styled.main`
  position: relative;
  flex: 1;
  background: #fff;
  overflow: hidden;
`;

const SceneSvg = styled.svg`
  position: absolute;
  left: 0;
  top: 0;
  width: 1917px;
  height: 846px;
`;

const GridLabel = styled.text`
  font-size: 14.5px;
  font-family: "Liberation Sans", Arial, sans-serif;
  fill: #999;
  text-anchor: middle;
`;

const CubeSvg = styled.svg`
  position: absolute;
  right: 0;
  top: 0;
  width: 157px;
  height: 140px;
  filter: blur(0.4px);
`;

const CubeAxis = styled.text`
  font-size: 16px;
  font-weight: 700;
  font-family: "Liberation Sans", Arial, sans-serif;
  text-anchor: middle;
`;

const CubeText = styled.text`
  font-family: "Liberation Sans", Arial, sans-serif;
  font-weight: 700;
  fill: #8c8c8c;
`;

const BrowserPanel = styled.section`
  position: absolute;
  left: 4px;
  top: 8px;
  width: 374px;
`;

const PanelHead = styled.div`
  box-sizing: border-box;
  height: 31px;
  display: flex;
  align-items: center;
  background: #f0f0f0;
  border: 1px solid #d0d0d0;
  border-bottom-width: 2px;
  padding: 0 13px 0 6px;
`;

const Rewind = styled.span`
  font-size: 10px;
  letter-spacing: -3px;
  color: #333;
  width: 25px;
`;

const PanelTitle = styled.span`
  flex: 1;
  font-size: 13.5px;
  color: #666;
  padding-left: ${p => (p.$flush ? '30px' : '0')};
`;

const RoundBtn = styled.span`
  width: 12px;
  height: 12px;
  border-radius: 50%;
  background: #333;
  color: #fff;
  font-size: 12px;
  font-weight: 700;
  line-height: 11px;
  text-align: center;
`;

const Tree = styled.div`
  display: flex;
  flex-direction: column;
  gap: 6px;
  padding-top: 6px;
`;

const RootRow = styled.div`
  display: flex;
  align-items: center;
  padding-left: 23px;
`;

const Row = styled.div`
  display: flex;
  align-items: center;
  padding-left: 46px;
`;

const Collapse = styled.span`
  width: 0;
  height: 0;
  margin-right: 13px;
  border-left: 9px solid transparent;
  border-bottom: 9px solid #222;
`;

const Expand = styled.span`
  box-sizing: border-box;
  width: 8px;
  height: 12px;
  margin-right: 14px;
  background: #333;
  clip-path: polygon(0 0, 100% 50%, 0 100%, 0 0, 16% 14%, 16% 86%, 84% 50%, 16% 14%);
`;

const RootCell = styled.div`
  display: flex;
  height: 25px;
  background: #f0f0f0;
`;

const EyeCell = styled.span`
  width: ${p => p.$w}px;
  display: flex;
  align-items: center;
  justify-content: center;
  &:first-child {
    margin-right: 3px;
  }
`;

const NameCell = styled.div`
  width: 207px;
  background: #999;
  display: flex;
  align-items: center;
  padding-left: 5px;
  box-sizing: border-box;
`;

const NameText = styled.span`
  margin-left: 19px;
  color: #fff;
  font-size: 13.5px;
  font-weight: 700;
  white-space: nowrap;
`;

const Badge = styled.span`
  position: relative;
  width: 16px;
  height: 16px;
  border-radius: 50%;
  background: #e8a317;
  color: #fff;
  font-size: 11px;
  font-weight: 700;
  line-height: 16px;
  text-align: center;
  &::after {
    content: '';
    position: absolute;
    right: -1px;
    bottom: -1px;
    box-sizing: border-box;
    width: 6px;
    height: 6px;
    border-radius: 50%;
    background: #fff;
    border: 1px solid #444;
  }
`;

const Radio = styled.span`
  box-sizing: border-box;
  width: 16px;
  height: 16px;
  border-radius: 50%;
  border: 1px solid #666;
  background: radial-gradient(circle, #444 0 3.5px, #e4e4e4 4px);
`;

const Chip = styled.div`
  display: flex;
  align-items: center;
  height: 24px;
  padding-left: 3px;
  background: #f0f0f0;
`;

const FolderSlot = styled.span`
  display: flex;
  margin-left: 11px;
`;

const ChipText = styled.span`
  margin-left: ${p => p.$ml}px;
  margin-right: ${p => p.$mr}px;
  font-size: 13.5px;
  color: #333;
  white-space: nowrap;
`;

const CommentsPanel = styled.section`
  position: absolute;
  left: 4px;
  bottom: 6px;
  width: 374px;
  height: 31px;
  box-sizing: border-box;
  display: flex;
  align-items: center;
  background: #f0f0f0;
  border: 1px solid #d0d0d0;
  border-bottom-width: 2px;
  padding-right: 13px;
`;

const NavBar = styled.div`
  position: absolute;
  left: 812px;
  bottom: 8px;
  width: 296px;
  height: 30px;
  box-sizing: border-box;
  display: flex;
  align-items: center;
  padding-left: 3px;
  background: #f0f0f0;
`;

const NavItem = styled.div`
  display: flex;
  align-items: center;
  gap: ${p => p.$gap || 0}px;
  margin-left: ${p => p.$ml || 0}px;
`;

const NavCaret = styled(Caret)`
  border-left-width: 4px;
  border-right-width: 4px;
  border-top-width: 5px;
  border-top-color: #333;
`;

const DropBadge = styled.div`
  position: absolute;
  right: 14px;
  bottom: 10px;
  height: 20px;
`;

const Timeline = styled.footer`
  flex: none;
  height: 60px;
  box-sizing: border-box;
  background: #f0f0f0;
  border-top: 1px solid #d8d8d8;
  display: flex;
  align-items: center;
  padding-left: 4px;
`;

const Controls = styled.div`
  display: flex;
  width: 155px;
`;

const ControlCell = styled.span`
  width: 31px;
  display: flex;
  justify-content: center;
`;

const Track = styled.div`
  align-self: flex-start;
  margin: 19px 0 0 23px;
`;

const TrackItems = styled.div`
  display: flex;
  gap: 10px;
`;

const TrackItem = styled.div`
  position: relative;
  width: 20px;
  height: 20px;
  &::after {
    content: '';
    position: absolute;
    left: 10px;
    top: 25px;
    width: 2px;
    height: 6px;
    background: #ccc;
  }
`;

const TrackRail = styled.div`
  height: 2px;
  margin: 9px 9px 0 10px;
  background: #ccc;
`;

const Marker = styled.div`
  align-self: flex-start;
  margin: 11px 0 0 -2px;
`;

const TimelineGear = styled.div`
  margin-left: auto;
  margin-right: 14px;
  display: flex;
`;
